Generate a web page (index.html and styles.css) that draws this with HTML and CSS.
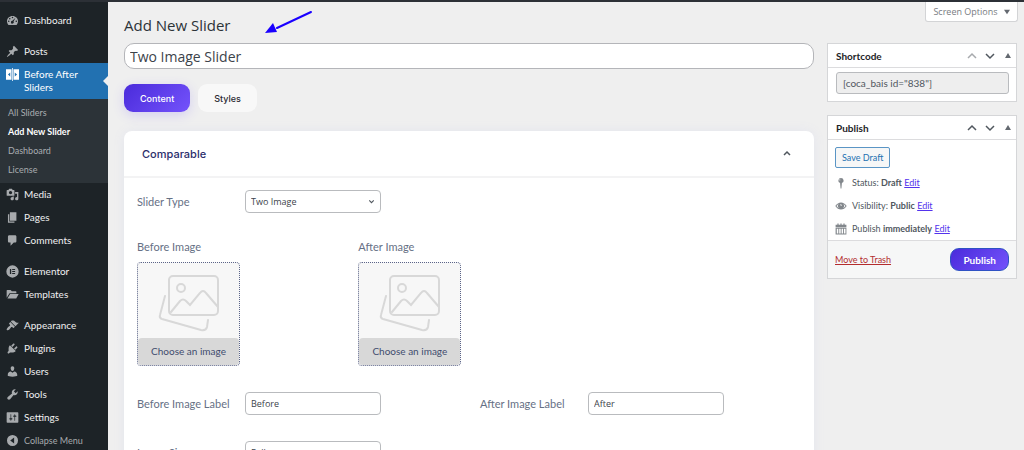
FILE: index.html
```html
<!DOCTYPE html>
<html lang="en">
<head>
    <meta charset="UTF-8">
    <meta name="viewport" content="width=device-width, initial-scale=1.0">
    <title>Add New Slider</title>
    <link rel="stylesheet" href="styles.css">
</head>
<body>
    <nav class="sidebar">
        <div class="menu-group">
            <a class="menu-item" href="#">
                <svg class="icon" viewBox="0 0 20 20"><path fill-rule="evenodd" d="M3.8 17h12.4C17.400 15.600 18.500 13.500 18.500 11.300 18.500 6.600 14.700 3 10 3S1.500 6.600 1.500 11.300C1.500 13.500 2.600 15.600 3.800 17zM10 4.200a1.200 1.200 0 1 1 0 2.400 1.200 1.200 0 0 1 0-2.400zM5.800 6a1.200 1.200 0 1 1 0 2.400 1.200 1.200 0 0 1 0-2.400zM14.600 5.800l-3 5.700a2.200 2.200 0 1 1-1.700-1zM4.200 10a1.200 1.200 0 1 1 0 2.400 1.200 1.200 0 0 1 0-2.400zM15.800 10a1.200 1.200 0 1 1 0 2.400 1.200 1.200 0 0 1 0-2.400z"/></svg>
                Dashboard
            </a>
        </div>
        <div class="menu-group">
            <a class="menu-item" href="#">
                <svg class="icon" viewBox="0 0 20 20"><path d="M10.440 3.020l1.820-1.820 6.360 6.350-1.830 1.820c-1.050-.68-2.480-.57-3.410.36l-.75.75c-.92.93-1.040 2.350-.35 3.410l-1.830 1.820-2.410-2.410-2.800 2.790c-.42.42-3.380 2.710-3.800 2.290s1.860-3.390 2.280-3.810l2.790-2.790L4.100 9.360l1.830-1.820c1.050.69 2.480.57 3.400-.36l.75-.75c.93-.92 1.050-2.350.36-3.410z"/></svg>
                Posts
            </a>
            <a class="menu-item active" href="#">
                <svg class="icon" viewBox="0 0 20 20"><path fill-rule="evenodd" d="M0 2h8.500v16H0zM11.500 2H20v16h-8.500zM6.500 7L3 10l3.500 3zM13.500 7v6l3.500-3z"/><path d="M9.400 0h1.200v20H9.400z"/></svg>
                Before After Sliders
            </a>
            <div class="submenu">
                <a href="#">All Sliders</a>
                <a class="current" href="#">Add New Slider</a>
                <a href="#">Dashboard</a>
                <a href="#">License</a>
            </div>
            <a class="menu-item" href="#">
                <svg class="icon" viewBox="0 0 20 20"><path fill-rule="evenodd" d="M13 11V4c0-.55-.45-1-1-1h-1.670L9 1H5L3.670 3H2c-.55 0-1 .45-1 1v7c0 .55.45 1 1 1h10c.55 0 1-.45 1-1zM7 4.500c1.380 0 2.500 1.120 2.500 2.500S8.380 9.500 7 9.500 4.500 8.380 4.500 7 5.620 4.500 7 4.500zM14 6h5v10.500c0 1.380-1.120 2.500-2.500 2.500S14 17.880 14 16.500s1.120-2.500 2.500-2.500c.17 0 .34.02.5.05V9h-3V6zm-4 8.050V13h2v3.500c0 1.380-1.120 2.500-2.500 2.500S7 17.880 7 16.500 8.120 14 9.500 14c.17 0 .34.02.5.05z"/></svg>
                Media
            </a>
            <a class="menu-item" href="#">
                <svg class="icon" viewBox="0 0 20 20"><path d="M6 15V2h10v13H6zm-1 1h8v2H3V5h2v11z"/></svg>
                Pages
            </a>
            <a class="menu-item" href="#">
                <svg class="icon" viewBox="0 0 20 20"><path d="M5 2h9c1.100 0 2 .9 2 2v7c0 1.100-.9 2-2 2h-2l-5 5v-5H5c-1.100 0-2-.9-2-2V4c0-1.100.9-2 2-2z"/></svg>
                Comments
            </a>
        </div>
        <div class="menu-group">
            <a class="menu-item" href="#">
                <svg class="icon" viewBox="0 0 20 20"><path fill-rule="evenodd" d="M10 .5a9.500 9.500 0 1 1 0 19 9.500 9.500 0 0 1 0-19zM6 6v8h2V6zM9.500 6v1.600H14V6zM9.500 9.200v1.600H14V9.200zM9.500 12.400V14H14v-1.600z"/></svg>
                Elementor
            </a>
            <a class="menu-item" href="#">
                <svg class="icon" viewBox="0 0 20 20"><path d="M1 15V4c0-.6.4-1 1-1h5l2 2h6c.6 0 1 .4 1 1v2H5.500zM6.300 9.200H19.500L15.700 16H2.200z"/></svg>
                Templates
            </a>
        </div>
        <div class="menu-group">
            <a class="menu-item" href="#">
                <svg class="icon" viewBox="0 0 20 20"><path d="M14.480 11.060L7.410 3.990l1.500-1.500c.5-.56 2.300-.47 3.510.32 1.210.8 1.430 1.280 2.910 2.100 1.180.64 2.450 1.260 4.450.85zm-.71.71L6.700 4.700 4.930 6.470c-.39.39-.39 1.020 0 1.410l1.060 1.060c.39.39.39 1.030 0 1.420-.6.6-1.430 1.110-2.210 1.690-.35.26-.7.53-1.010.84C1.430 14.230.4 16.080 1.400 17.070c.99 1 2.840-.03 4.180-1.360.31-.31.58-.66.85-1.020.57-.78 1.080-1.610 1.690-2.210.39-.39 1.020-.39 1.410 0l1.060 1.060c.39.39 1.020.39 1.410 0z"/></svg>
                Appearance
            </a>
            <a class="menu-item" href="#">
                <svg class="icon" viewBox="0 0 20 20"><path d="M13.110 4.360L9.870 7.600 8 5.730l3.240-3.240c.35-.34 1.050-.2 1.560.32.52.51.66 1.210.31 1.550zm-8 1.770l.91-1.120 9.010 9.010-1.190.84c-.71.71-2.630 1.160-3.820 1.160H6.140L4.900 17.260c-.59.59-1.540.59-2.120 0-.59-.58-.59-1.530 0-2.120l1.240-1.240v-3.880c0-1.130.4-3.190 1.090-3.890zm7.260 3.970l3.240-3.240c.34-.35 1.040-.21 1.550.31.52.51.66 1.210.31 1.550l-3.240 3.250z"/></svg>
                Plugins
            </a>
            <a class="menu-item" href="#">
                <svg class="icon" viewBox="0 0 20 20"><path d="M10 9.250c-2.270 0-2.730-3.440-2.730-3.440C7 4.020 7.820 2 9.970 2c2.160 0 2.980 2.020 2.710 3.810 0 0-.41 3.440-2.680 3.440zm0 2.570L12.720 10c2.390 0 4.520 2.330 4.520 4.530v2.490s-3.650 1.130-7.240 1.130c-3.650 0-7.240-1.130-7.240-1.130v-2.490c0-2.250 1.940-4.480 4.470-4.480z"/></svg>
                Users
            </a>
            <a class="menu-item" href="#">
                <svg class="icon" viewBox="0 0 20 20"><path fill-rule="evenodd" d="M16.680 9.770c-1.340 1.340-3.300 1.670-4.950.99l-5.410 6.520c-.99.99-2.590.99-3.580 0s-.99-2.590 0-3.570l6.520-5.420c-.68-1.650-.35-3.610.99-4.950 1.280-1.280 3.120-1.620 4.720-1.060l-2.890 2.890 2.820 2.820 2.860-2.870c.53 1.580.18 3.390-1.080 4.650z"/></svg>
                Tools
            </a>
            <a class="menu-item" href="#">
                <svg class="icon" viewBox="0 0 20 20"><path fill-rule="evenodd" d="M19 17V3c0-.55-.45-1-1-1H2c-.55 0-1 .45-1 1v14c0 .55.45 1 1 1h16c.55 0 1-.45 1-1zM8 11h1c.55 0 1 .45 1 1s-.45 1-1 1H8v1.500c0 .28-.22.5-.5.5s-.5-.22-.5-.5V13H6c-.55 0-1-.45-1-1s.45-1 1-1h1V5.500c0-.28.22-.5.5-.5s.5.22.5.5V11zm5-2h-1c-.55 0-1-.45-1-1s.45-1 1-1h1V5.500c0-.28.22-.5.5-.5s.5.22.5.5V7h1c.55 0 1 .45 1 1s-.45 1-1 1h-1v5.500c0 .28-.22.5-.5.5s-.5-.22-.5-.5V9z"/></svg>
                Settings
            </a>
            <a class="menu-item collapse" href="#">
                <svg class="icon" viewBox="0 0 20 20"><path fill-rule="evenodd" d="M10 1.500a8.500 8.500 0 1 1 0 17 8.500 8.500 0 0 1 0-17zM12.500 5.500L6.500 10l6 4.500z"/></svg>
                Collapse Menu
            </a>
        </div>
    </nav>

    <main class="content">
        <button class="screen-options">Screen Options <svg class="caret" viewBox="0 0 8 8"><path d="M0 1h8L4 7z"/></svg></button>
        <!-- arrow that points at the title field -->
        <svg class="arrow" viewBox="0 0 48 24"><path d="M46 2L12 18" stroke="#1a00ff" stroke-width="2" stroke-linecap="round"/><path d="M0 23L8 13l4 9z" fill="#1a00ff"/></svg>

        <div class="editor">
            <h1>Add New Slider</h1>
            <input class="title-input" type="text" aria-label="Title" value="Two Image Slider">

            <div class="tabs">
                <button class="tab tab-active">Content</button>
                <button class="tab">Styles</button>
            </div>

            <section class="panel">
                <div class="panel-head">
                    <h2>Comparable</h2>
                    <svg class="chevron" viewBox="0 0 12 12"><path d="M3 7l3-3 3 3"/></svg>
                </div>
                <div class="panel-body">
                    <div class="row">
                        <div class="field">
                            <label for="type">Slider Type</label>
                            <select id="type"><option>Two Image</option></select>
                        </div>
                    </div>
                    <div class="images">
                        <div class="image-field">
                            <h3>Before Image</h3>
                            <button class="upload">
                                <svg class="picture" viewBox="0 0 62 58"><rect x="11" y="2" width="49" height="39" rx="4"/><circle cx="23" cy="14" r="4"/><path d="M13 38L22 27q3-3 6 0l4 4L42 19q3-4 6 0L60 33M7 22L2 41q-1 3 2 4L43 56q5 1 6-3l1-7"/></svg>
                                <span>Choose an image</span>
                            </button>
                        </div>
                        <div class="image-field">
                            <h3>After Image</h3>
                            <button class="upload">
                                <svg class="picture" viewBox="0 0 62 58"><rect x="11" y="2" width="49" height="39" rx="4"/><circle cx="23" cy="14" r="4"/><path d="M13 38L22 27q3-3 6 0l4 4L42 19q3-4 6 0L60 33M7 22L2 41q-1 3 2 4L43 56q5 1 6-3l1-7"/></svg>
                                <span>Choose an image</span>
                            </button>
                        </div>
                    </div>
                    <div class="row">
                        <div class="field">
                            <label for="before">Before Image Label</label>
                            <input id="before" type="text" value="Before">
                        </div>
                        <div class="field">
                            <label for="after">After Image Label</label>
                            <input id="after" type="text" value="After">
                        </div>
                    </div>
                    <div class="row">
                        <div class="field">
                            <label for="size">Image Size</label>
                            <select id="size"><option>Full</option></select>
                        </div>
                    </div>
                </div>
            </section>
        </div>

        <aside class="side">
            <section class="box">
                <div class="box-head">
                    <h2>Shortcode</h2>
                    <svg class="box-arrow dim" viewBox="0 0 12 12"><path d="M2 8l4-4 4 4"/></svg>
                    <svg class="box-arrow" viewBox="0 0 12 12"><path d="M2 4l4 4 4-4"/></svg>
                    <svg class="box-toggle" viewBox="0 0 6 6"><path d="M0 5h6L3 0z"/></svg>
                </div>
                <div class="shortcode">
                    <input type="text" aria-label="Shortcode" value='[coca_bais id="838"]' readonly>
                </div>
            </section>

            <section class="box">
                <div class="box-head">
                    <h2>Publish</h2>
                    <svg class="box-arrow" viewBox="0 0 12 12"><path d="M2 8l4-4 4 4"/></svg>
                    <svg class="box-arrow" viewBox="0 0 12 12"><path d="M2 4l4 4 4-4"/></svg>
                    <svg class="box-toggle" viewBox="0 0 6 6"><path d="M0 5h6L3 0z"/></svg>
                </div>
                <div class="publish">
                    <button class="save">Save Draft</button>
                    <div class="status">
                        <svg class="icon" viewBox="0 0 20 20"><path fill-rule="evenodd" d="M10 1.500a4.500 4.500 0 0 1 1.500 8.700L10.700 19H9.300L8.500 10.200A4.500 4.500 0 0 1 10 1.500zM8.500 3.500a2 2 0 0 0-1 2.500h1.200z"/></svg>
                        <p>Status: <b>Draft</b> <a href="#">Edit</a></p>
                    </div>
                    <div class="status">
                        <svg class="icon" viewBox="0 0 20 20"><path fill-rule="evenodd" d="M.5 10C3 6 6.500 4 10 4s7 2 9.500 6C17 14 13.500 16 10 16S3 14 .5 10zM2.500 10c1.200 1.700 2.500 3 4.200 3.700A5 5 0 0 1 6.700 6.300C5 7 3.700 8.300 2.500 10zM17.500 10c-1.200-1.700-2.500-3-4.200-3.700a5 5 0 0 1 0 7.400C15 13 16.300 11.700 17.500 10zM10 6.500a1.500 1.500 0 1 0 1.500 2.500z"/></svg>
                        <p>Visibility: <b>Public</b> <a href="#">Edit</a></p>
                    </div>
                    <div class="status">
                        <svg class="icon" viewBox="0 0 20 20"><path fill-rule="evenodd" d="M1 3h3V1h2v2h3V1h2v2h3V1h2v2h3v4H1zM1 8h18v11H1zM3 9.500V17.500h2.500V9.500zM7 9.500V17.500h2.500V9.500zM11 9.500V17.500h2.500V9.500zM15 9.500V17.500h2.500V9.500z"/></svg>
                        <p>Publish <b>immediately</b> <a href="#">Edit</a></p>
                    </div>
                </div>
                <div class="box-foot">
                    <a class="trash" href="#">Move to Trash</a>
                    <button class="publish-btn">Publish</button>
                </div>
            </section>
        </aside>
    </main>
</body>
</html>
```
FILE: styles.css
```css
*{
    margin: 0px;
    padding: 0px;
    box-sizing: border-box;
    font-family: Lato, 'Open Sans', sans-serif;
}
body{
    display: flex;
    height: 100vh;
    overflow: hidden;
    background-color: #efefef;
    border-top: 2px solid #2c3036;
    font-size: 10px;
    color: #50575e;
}
button{
    border: none;
    cursor: pointer;
}

/* left menu */
.sidebar{
    flex: none;
    width: 108px;
    padding-top: 7px;
    background-color: #1d2327;
}
.menu-group{
    display: flex;
    flex-direction: column;
    margin-bottom: 8px;
}
.menu-item{
    position: relative;
    display: flex;
    gap: 5px;
    padding: 5px 20px 5px 6px;
    font-size: 10px;
    line-height: 13px;
    color: #f0f0f1;
    text-decoration: none;
}
.icon{
    flex: none;
    width: 13px;
    height: 13px;
    fill: #a7aaad;
}
.active{
    background-color: #2271b1;
    color: white;
}
.active .icon{
    fill: white;
}
.active::after{
    content: "";
    position: absolute;
    right: 0px;
    top: 13px;
    border: 5px solid transparent;
    border-right-color: #efefef;
}
.submenu{
    display: flex;
    flex-direction: column;
    padding: 4px 8px;
    background-color: #2c3338;
}
.submenu a{
    font-size: 9px;
    line-height: 19px;
    color: #a9adb1;
    text-decoration: none;
}
.submenu .current{
    color: white;
    font-weight: 700;
}
.collapse{
    font-size: 9px;
    color: #a7aaad;
}

/* editor */
.content{
    position: relative;
    flex: 1;
    display: flex;
    align-items: flex-start;
    gap: 13px;
    padding: 12px 7px 0px 16px;
}
.arrow{
    position: absolute;
    left: 157px;
    top: 8px;
    width: 48px;
    height: 24px;
    fill: none;
}
.screen-options{
    position: absolute;
    right: 6px;
    top: 0px;
    display: flex;
    align-items: center;
    justify-content: center;
    gap: 6px;
    width: 93px;
    height: 20px;
    background-color: white;
    border: 1px solid #d3d4d6;
    border-top: none;
    border-radius: 0px 0px 3px 3px;
    font-family: 'Open Sans', sans-serif;
    font-size: 9px;
    color: #787c82;
}
.caret{
    width: 6px;
    height: 6px;
    fill: #646970;
}
.editor{
    flex: 1;
}
.editor h1{
    font-family: 'Open Sans', sans-serif;
    font-size: 15px;
    font-weight: 400;
    line-height: 23px;
    color: #2c3338;
}
.title-input{
    display: block;
    width: 100%;
    height: 26px;
    margin-top: 6px;
    padding: 0px 5px;
    border: 1px solid #b4b5b9;
    border-radius: 10px;
    background-color: white;
    font-family: 'Open Sans', sans-serif;
    font-size: 14px;
    color: #3c434a;
}
.tabs{
    display: flex;
    gap: 8px;
    margin: 15px 0px 19px;
}
.tab{
    height: 28px;
    padding: 0px 16px;
    border-radius: 9px;
    background-color: #f8f8f8;
    font-family: Inter, sans-serif;
    font-size: 9px;
    font-weight: 500;
    color: #2b2b33;
}
.tab-active{
    background: linear-gradient(135deg, #4a2bdb, #7453fb);
    box-shadow: 0px 3px 12px #d3cef0;
    color: white;
}

.panel{
    background-color: white;
    border-radius: 8px;
    box-shadow: 0px 0px 12px #e4e5ee;
}
.panel-head{
    display: flex;
    justify-content: space-between;
    align-items: center;
    height: 47px;
    padding: 0px 21px 0px 18px;
    border-bottom: 2px solid #f3f3f4;
}
.panel-head h2{
    font-family: Inter, sans-serif;
    font-size: 11px;
    font-weight: 500;
    color: #2b2e6b;
}
.chevron, .box-arrow{
    width: 12px;
    height: 12px;
    fill: none;
    stroke: #50575e;
    stroke-width: 1.5;
}
.panel-body{
    display: flex;
    flex-direction: column;
    gap: 26px;
    padding: 12px 13px 20px;
}
.row{
    display: grid;
    grid-template-columns: 1fr 1fr;
    gap: 22px;
}
.field{
    display: grid;
    grid-template-columns: 108px 136px;
    align-items: center;
}
.field label, .image-field h3{
    font-size: 11px;
    font-weight: 400;
    line-height: 15px;
    color: #667085;
}
.field input, .field select{
    height: 23px;
    padding: 0px 5px;
    border: 1px solid #b9bbbe;
    border-radius: 4px;
    background-color: white;
    font-family: 'Open Sans', sans-serif;
    font-size: 9px;
    color: #3c434a;
}
.field select{
    appearance: none;
    background-image: url("data:image/svg+xml,%3Csvg xmlns='http://www.w3.org/2000/svg' viewBox='0 0 8 8'%3E%3Cpath d='M2 3l2 2 2-2' fill='none' stroke='%2350575e'/%3E%3C/svg%3E");
    background-repeat: no-repeat;
    background-position: right 4px center;
    background-size: 9px 9px;
}
.images{
    display: grid;
    grid-template-columns: 1fr 1fr 1fr;
}
.upload{
    display: flex;
    flex-direction: column;
    align-items: center;
    justify-content: space-between;
    width: 103px;
    height: 104px;
    margin-top: 8px;
    padding-top: 11px;
    border: 1px dotted #5b6488;
    border-radius: 4px;
    background-color: #f7f7f7;
}
.picture{
    width: 62px;
    height: 58px;
    fill: none;
    stroke: #d8d8d8;
    stroke-width: 2;
    stroke-linecap: round;
}
.upload span{
    width: 100%;
    border-radius: 4px;
    background-color: #d8d8d8;
    font-size: 10px;
    line-height: 27px;
    color: #414c6e;
}

/* right column */
.side{
    display: flex;
    flex-direction: column;
    gap: 13px;
    width: 190px;
    margin-top: 29px;
}
.box{
    background-color: white;
    border: 1px solid #d5d6d8;
}
.box-head{
    display: flex;
    align-items: center;
    gap: 6px;
    height: 24px;
    padding: 0px 5px 0px 8px;
    border-bottom: 1px solid #dcdcde;
}
.box-head h2{
    flex: 1;
    font-size: 10px;
    font-weight: 700;
    color: #1d2327;
}
.box-head .dim{
    stroke: #a7aaad;
}
.box-toggle{
    width: 6px;
    height: 6px;
    margin-left: 3px;
    fill: #646970;
}
.shortcode{
    padding: 4px 7px 7px 8px;
}
.shortcode input{
    display: block;
    width: 100%;
    height: 22px;
    padding: 0px 6px;
    border: 1px solid #b9bbbe;
    border-radius: 3px;
    background-color: #eeeeee;
    font-size: 10px;
    color: #50575e;
}
.publish{
    padding: 7px 7px 0px;
}
.save{
    display: block;
    height: 21px;
    padding: 0px 6px;
    margin-bottom: 3px;
    border: 1px solid #5a95c5;
    border-radius: 2px;
    background-color: #f6f7f7;
    font-size: 9px;
    color: #2271b1;
}
.status{
    display: flex;
    align-items: center;
    gap: 5px;
    height: 23px;
    font-size: 9px;
}
.status .icon{
    width: 12px;
    height: 12px;
    fill: #82878c;
}
.status b{
    font-weight: 700;
}
.status a{
    color: #5333ed;
}
.box-foot{
    display: flex;
    justify-content: space-between;
    align-items: center;
    height: 38px;
    padding: 0px 7px;
    border-top: 1px solid #dcdcde;
    background-color: #f6f7f7;
}
.trash{
    font-size: 9px;
    color: #b32d2e;
}
.publish-btn{
    height: 23px;
    padding: 0px 12px;
    border: 1px solid #2f52c4;
    border-radius: 9px;
    background: linear-gradient(135deg, #4a2bdb, #7453fb);
    font-size: 10px;
    font-weight: 700;
    color: white;
}
```
